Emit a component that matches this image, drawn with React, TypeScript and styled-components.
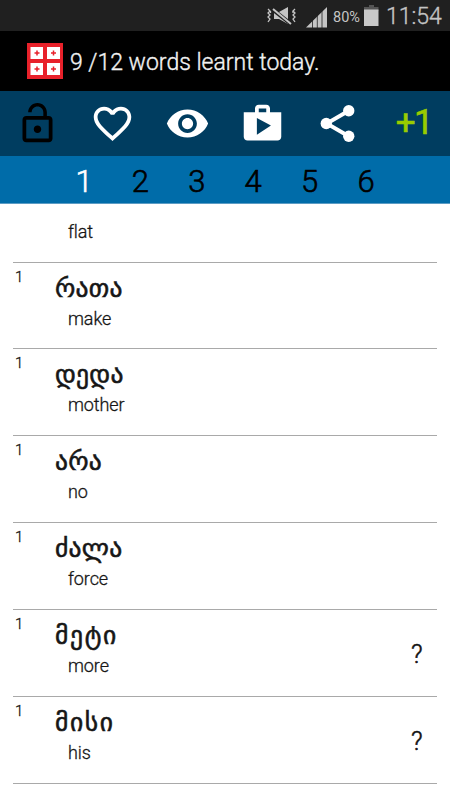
import React from "react";
import styled, { createGlobalStyle } from "styled-components";

const GlobalStyle = createGlobalStyle`
  *, *::before, *::after { box-sizing: border-box; }
  body { margin: 0; background: #fff; font-family: Roboto, "DejaVu Sans", sans-serif; }
`;

const Screen = styled.main`
  width: 450px;
  height: 800px;
  overflow: hidden;
  display: flex;
  flex-direction: column;
  background: #fff;
`;

const StatusBar = styled.header`
  flex: none;
  height: 31px;
  display: flex;
  align-items: center;
  justify-content: flex-end;
  padding-right: 9px;
  background: #202020;
  color: #c4c4c4;
`;

const Battery = styled.span`
  width: 32px;
  font-size: 14.5px;
  line-height: 31px;
  padding: 3px 0 0 1px;
  white-space: nowrap;
`;

const Clock = styled.time`
  width: 55px;
  font-size: 23px;
  font-weight: 300;
  -webkit-text-stroke: 0.35px;
  line-height: 31px;
  padding-top: 2px;
  white-space: nowrap;
`;

const StatusIcons = styled.svg`
  flex: none;
  display: block;
`;

const TitleBar = styled.div`
  flex: none;
  height: 60px;
  display: flex;
  align-items: center;
  gap: 7px;
  padding-left: 27px;
  background: #000;
`;

const Title = styled.h1`
  margin: 0;
  padding-top: 3px;
  font-size: 23px;
  font-weight: 300;
  -webkit-text-stroke: 0.35px;
  line-height: 30px;
  color: #f2f2f2;
  white-space: nowrap;
`;

const Toolbar = styled.nav`
  flex: none;
  height: 65px;
  display: grid;
  grid-template-columns: repeat(6, 75px);
  background: #003d60;
`;

const ToolButton = styled.button<{ $tone?: string }>`
  display: flex;
  align-items: center;
  justify-content: center;
  padding: 0;
  border: 0;
  background: none;
  color: ${(p) => p.$tone ?? "#fff"};
`;

const Glyph = styled.svg`
  width: 45px;
  height: 45px;
  fill: currentColor;
`;

const Tabs = styled.div`
  flex: none;
  height: 48px;
  display: grid;
  grid-template-columns: repeat(6, 56.4px);
  justify-content: center;
  background: #006ca9;
  border-bottom: 1px solid #5c9cc4;
`;

const Tab = styled.button<{ $active?: boolean }>`
  padding: 3px 0 0;
  border: 0;
  background: none;
  font: 300 31px/46px Roboto, sans-serif;
  -webkit-text-stroke: 0.6px;
  color: ${(p) => (p.$active ? "#fff" : "#000")};
`;

const WordList = styled.ul`
  margin: 0;
  padding: 0 13px;
  list-style: none;
`;

const Row = styled.li<{ $clipped?: boolean }>`
  height: ${(p) => (p.$clipped ? "58.6px" : "86.85px")};
  display: grid;
  grid-template-columns: 42px 1fr 26px;
  border-bottom: 1px solid #a9a9a9;
`;

const Level = styled.span`
  padding: 5px 0 0 2px;
  font-size: 15px;
  font-weight: 300;
  -webkit-text-stroke: 0.3px;
  line-height: 18px;
  color: #111;
`;

const Entry = styled.div<{ $clipped?: boolean }>`
  grid-column: 2;
  padding-top: ${(p) => (p.$clipped ? "17px" : "6px")};
`;

const Word = styled.div<{ $spacing?: number }>`
  height: 39px;
  font: 400 25.5px/38px "DejaVu Sans", sans-serif;
  letter-spacing: ${(p) => p.$spacing ?? 0.25}px;
  color: #161616;
  -webkit-text-stroke: 0.6px #161616;
  white-space: nowrap;
`;

const Meaning = styled.div`
  padding-left: 13px;
  font-size: 18px;
  font-weight: 300;
  -webkit-text-stroke: 0.3px;
  letter-spacing: -0.1px;
  line-height: 22px;
  color: #161616;
`;

const Hint = styled.span`
  align-self: center;
  padding: 3px 0 0;
  font-size: 25.5px;
  font-weight: 300;
  -webkit-text-stroke: 0.5px;
  line-height: 28px;
  color: #111;
`;

const icons = {
  lock: "M12 17c1.1 0 2-.9 2-2s-.9-2-2-2-2 .9-2 2 .9 2 2 2zm6-9h-1V6c0-2.76-2.24-5-5-5S7 3.24 7 6h1.9c0-1.71 1.39-3.1 3.1-3.1 1.71 0 3.1 1.39 3.1 3.1v2H6c-1.1 0-2 .9-2 2v10c0 1.1.9 2 2 2h12c1.1 0 2-.9 2-2V10c0-1.1-.9-2-2-2zm0 12H6V10h12v10z",
  heart: "M16.5 3c-1.74 0-3.41.81-4.5 2.09C10.91 3.81 9.24 3 7.5 3 4.42 3 2 5.42 2 8.5c0 3.78 3.4 6.86 8.55 11.54L12 21.35l1.45-1.32C18.6 15.36 22 12.28 22 8.5 22 5.42 19.58 3 16.5 3zm-4.4 15.55l-.1.1-.1-.1C7.14 14.24 4 11.39 4 8.5 4 6.5 5.5 5 7.5 5c1.54 0 3.04.99 3.57 2.36h1.87C13.46 5.99 14.96 5 16.5 5c2 0 3.5 1.5 3.5 3.5 0 2.89-3.14 5.74-7.9 10.05z",
  eye: "M12 4.5C7 4.5 2.73 7.61 1 12c1.73 4.39 6 7.5 11 7.5s9.27-3.11 11-7.5c-1.73-4.39-6-7.5-11-7.5zM12 17c-2.76 0-5-2.24-5-5s2.24-5 5-5 5 2.24 5 5-2.24 5-5 5zm0-8c-1.66 0-3 1.34-3 3s1.34 3 3 3 3-1.34 3-3-1.34-3-3-3z",
  shop: "M16 6V4c0-1.11-.89-2-2-2h-4c-1.11 0-2 .89-2 2v2H2v13c0 1.11.89 2 2 2h16c1.11 0 2-.89 2-2V6h-6zm-6-2h4v2h-4V4zM9 18V9l7.5 4L9 18z",
};

const words = [
  { word: "რათა", meaning: "make" },
  { word: "დედა", meaning: "mother" },
  { word: "არა", meaning: "no" },
  { word: "ძალა", meaning: "force" },
  { word: "მეტი", meaning: "more", hint: true, spacing: 1.7 },
  { word: "მისი", meaning: "his", hint: true, spacing: 1.6 },
];

function StatusGlyphs() {
  return (
    <StatusIcons width="66" height="31" viewBox="266 0 66 31">
      <g fill="none" stroke="#c4c4c4" strokeWidth="1.3">
        <path d="M268 9l2 2-2 2 2 2-2 2 2 2-2 3" />
        <path d="M270.500 11v2M293 11v2" />
        <path d="M295 9l-2 2 2 2-2 2 2 2-2 2 2 3" />
      </g>
      <path d="M274 12h5l9-5v17l-9-5h-5z" fill="#c4c4c4" />
      <path d="M272 9l19 15" stroke="#202020" strokeWidth="4" />
      <path d="M273 9l18 15" stroke="#c4c4c4" strokeWidth="2" />
      <path d="M306 27.500L327 7v20.500z" fill="#c4c4c4" />
      <path d="M312.500 16v12M317.300 12v16M322 7v21" stroke="#202020" strokeWidth=".8" />
    </StatusIcons>
  );
}

function BatteryGlyph() {
  return (
    <StatusIcons width="22" height="31" viewBox="0 0 22 31">
      <path d="M5 5h5v2h4.500v4H0V7h5z" fill="#555" />
      <path d="M0 9.500h14.500v16.500H0z" fill="#c8c8c8" />
    </StatusIcons>
  );
}

function Flag() {
  return (
    <svg width="36" height="36" viewBox="0 0 36 36">
      <path d="M0 0h36v36H0z" fill="#e8212a" />
      <path d="M3.500 4h12.500v12H3.500zM20 4h13v12H20zM3.500 20H16v12H3.500zM20 20h13v12H20z" fill="#fff" />
      <path
        d="M10 7.500v5M7.500 10h5M26.500 7.500v5M24 10h5M10 23.500v5M7.500 26h5M26.500 23.500v5M24 26h5"
        stroke="#e8212a"
        strokeWidth="1.500"
      />
    </svg>
  );
}

function Icon({ d }: { d: string }) {
  return (
    <Glyph viewBox="0 0 24 24">
      <path d={d} />
    </Glyph>
  );
}

const PlusOne = styled.span`
  padding: 0 0 1px 3px;
  font: 400 35px/40px Roboto, sans-serif;
  -webkit-text-stroke: 0.6px;
  letter-spacing: -1.5px;
`;

export default function App() {
  return (
    <Screen>
      <GlobalStyle />
      <StatusBar>
        <StatusGlyphs />
        <Battery>80%</Battery>
        <BatteryGlyph />
        <Clock>11:54</Clock>
      </StatusBar>
      <TitleBar>
        <Flag />
        <Title>9 /12 words learnt today.</Title>
      </TitleBar>
      <Toolbar>
        <ToolButton $tone="#000"><Icon d={icons.lock} /></ToolButton>
        <ToolButton><Icon d={icons.heart} /></ToolButton>
        <ToolButton><Icon d={icons.eye} /></ToolButton>
        <ToolButton><Icon d={icons.shop} /></ToolButton>
        <ToolButton>
          <Glyph viewBox="0 0 46 46">
            <path d="M34.500 10L12 23l22.500 13" fill="none" stroke="currentColor" strokeWidth="4" />
            <circle cx="34.500" cy="10" r="5.800" />
            <circle cx="11.500" cy="23" r="5.800" />
            <circle cx="34.500" cy="36" r="5.800" />
          </Glyph>
        </ToolButton>
        <ToolButton $tone="#99cc00"><PlusOne>+1</PlusOne></ToolButton>
      </Toolbar>
      <Tabs>
        {[1, 2, 3, 4, 5, 6].map((n) => (
          <Tab key={n} $active={n === 1}>{n}</Tab>
        ))}
      </Tabs>
      <WordList>
        <Row $clipped>
          <Entry $clipped><Meaning>flat</Meaning></Entry>
        </Row>
        {words.map((w) => (
          <Row key={w.meaning}>
            <Level>1</Level>
            <Entry>
              <Word $spacing={w.spacing}>{w.word}</Word>
              <Meaning>{w.meaning}</Meaning>
            </Entry>
            {w.hint && <Hint>?</Hint>}
          </Row>
        ))}
      </WordList>
    </Screen>
  );
}
